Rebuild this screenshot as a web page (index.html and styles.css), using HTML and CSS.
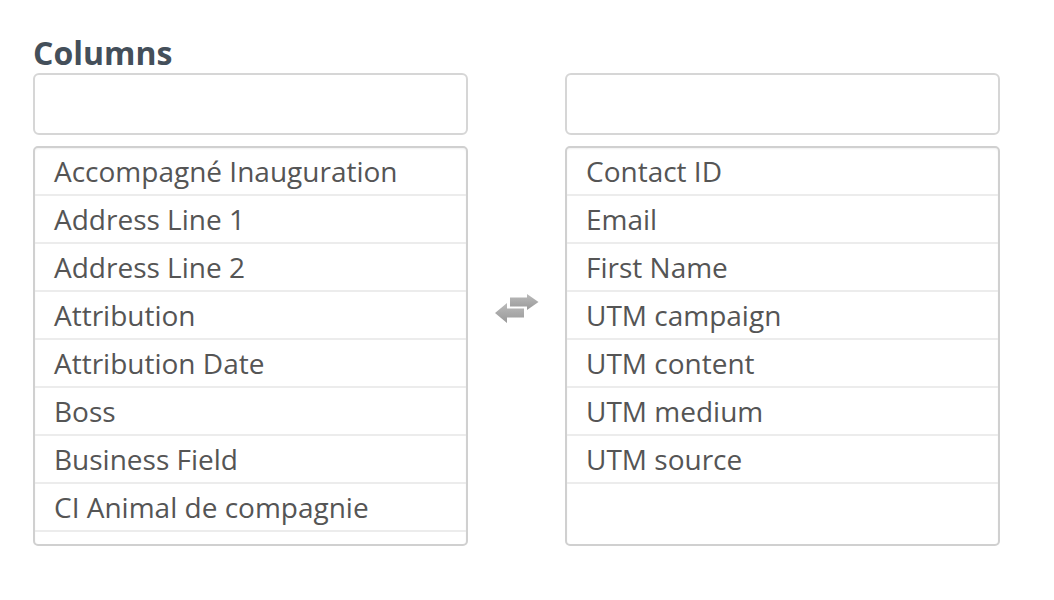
FILE: index.html
```html
<!DOCTYPE html>
<html>
<head>
<meta charset="utf-8">
<link rel="stylesheet" href="styles.css">
</head>
<body>
<div class="page">
  <h2 class="title">Columns</h2>
  <div class="picker">
    <div class="col">
      <div class="search"></div>
      <ul class="list">
        <li>Accompagné Inauguration</li>
        <li>Address Line 1</li>
        <li>Address Line 2</li>
        <li>Attribution</li>
        <li>Attribution Date</li>
        <li>Boss</li>
        <li>Business Field</li>
        <li>CI Animal de compagnie</li>
      </ul>
    </div>
    <div class="mid">
      <svg class="swap" width="44" height="31" viewBox="0 0 44 31">
        <defs>
          <linearGradient id="g" x1="0" y1="0" x2="0" y2="1">
            <stop offset="0" stop-color="#bbbbbb"/>
            <stop offset="1" stop-color="#999999"/>
          </linearGradient>
        </defs>
        <path d="M15 3.5 H32 V0 L43.5 8 L32 16 V12.5 H15 Z" fill="url(#g)"/>
        <path d="M29 14.5 H12 V9 L0 19 L12 29 V23.5 H29 Z" fill="url(#g)"/>
      </svg>
    </div>
    <div class="col">
      <div class="search"></div>
      <ul class="list">
        <li>Contact ID</li>
        <li>Email</li>
        <li>First Name</li>
        <li>UTM campaign</li>
        <li>UTM content</li>
        <li>UTM medium</li>
        <li>UTM source</li>
      </ul>
    </div>
  </div>
</div>
</body>
</html>
```

FILE: styles.css
```css
html, body {
  margin: 0;
  padding: 0;
  background: #fff;
}
.page {
  padding: 33px 0 0 33px;
  font-family: "Open Sans", "DejaVu Sans", sans-serif;
}
.title {
  margin: 0;
  font-size: 32px;
  font-weight: 700;
  line-height: 40px;
  color: #444f5a;
}
.picker {
  display: flex;
  align-items: flex-start;
}
.col {
  width: 435px;
  display: flex;
  flex-direction: column;
  gap: 11px;
}
.search {
  height: 58px;
  border: 2px solid #d6d6d6;
  border-radius: 6px;
  background: #fff;
}
.list {
  margin: 0;
  padding: 0;
  list-style: none;
  height: 396px;
  border: 2px solid #d0d0d0;
  border-radius: 5px;
  box-shadow: inset 0 1px 2px rgba(0,0,0,0.06);
  overflow: hidden;
}
.list li {
  height: 46px;
  line-height: 46px;
  padding-left: 19px;
  border-bottom: 2px solid #ececec;
  font-size: 28px;
  color: #555;
  white-space: nowrap;
}
.mid {
  width: 97px;
  padding: 221px 0 0 27px;
  box-sizing: border-box;
}
.swap {
  display: block;
}
```
